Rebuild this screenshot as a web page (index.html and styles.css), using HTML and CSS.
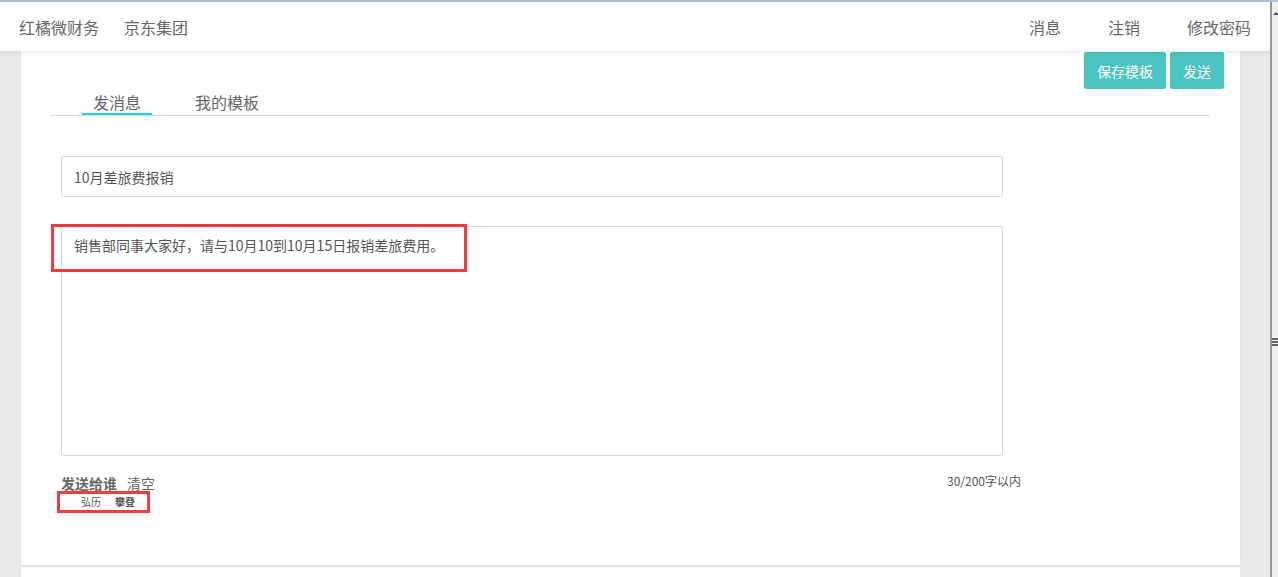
FILE: index.html
```html
<!DOCTYPE html>
<html lang="zh-CN">
<head>
    <meta charset="UTF-8">
    <meta name="viewport" content="width=device-width, initial-scale=1.0">
    <title>发消息</title>
    <link rel="stylesheet" href="styles.css">
</head>
<body>
    <section class="window">
        <section class="page">
            <header class="topbar">
                <nav class="nav nav-left">
                    <a class="nav-item">红橘微财务</a>
                    <a class="nav-item">京东集团</a>
                </nav>
                <nav class="nav nav-right">
                    <a class="nav-item">消息</a>
                    <a class="nav-item">注销</a>
                    <a class="nav-item">修改密码</a>
                </nav>
            </header>

            <section class="content">
                <section class="card">
                    <div class="actions">
                        <button class="btn">保存模板</button>
                        <button class="btn">发送</button>
                    </div>

                    <div class="tabs">
                        <span class="tab active">发消息</span>
                        <span class="tab">我的模板</span>
                    </div>

                    <div class="form">
                        <div class="field title-field">10月差旅费报销</div>

                        <div class="field body-field">
                            销售部同事大家好，请与10月10到10月15日报销差旅费用。
                            <span class="mark mark-body"></span>
                        </div>

                        <div class="footer-row">
                            <div class="to">
                                <b>发送给谁</b>
                                <span class="clear">清空</span>
                            </div>
                            <span class="counter">30/200字以内</span>
                        </div>

                        <div class="people">
                            <span class="person">弘历</span>
                            <span class="person strong">攀登</span>
                        </div>
                    </div>
                </section>
                <section class="card-next"></section>
            </section>
        </section>

        <aside class="scroll">
            <span class="scroll-up"></span>
            <span class="scroll-grip"></span>
        </aside>
    </section>
</body>
</html>
```

FILE: styles.css
```css
*{margin: 0;padding: 0;box-sizing: border-box;}
body{
    width: 1278px; height: 577px; overflow: hidden;
    font-family: "Noto Sans CJK SC", "Liberation Sans", sans-serif;
    color: #555; background: #e9e9e9;}
.window{display: flex; height: 577px; border-top: 2px solid #adc0d8;}
.page{width: 1270px; display: flex; flex-direction: column;}

/* шапка */
.topbar{
    height: 49px; background: #fff;
    display: flex; justify-content: space-between; align-items: center;
    padding: 0 19px; position: relative; z-index: 2;
    box-shadow: 0 2px 4px rgba(0,0,0,0.08);}
.nav{display: flex; gap: 25px;}
.nav-right{gap: 47px;}
.nav-item{font-size: 16px; line-height: 20px; color: #666; cursor: pointer;}

.content{padding: 0 30px 0 21px; flex: 1; display: flex; flex-direction: column;}
.card{
    background: #fff; height: 514px; padding: 1px 30px 0 29px;
    box-shadow: 0 1px 2px rgba(0,0,0,0.06);}
.card-next{background: #fff; flex: 1; margin-top: 2px;}

.actions{display: flex; justify-content: flex-end; gap: 4px; margin-right: -14px;}
.btn{
    height: 37px; padding: 0 12px; border: none; border-radius: 2px;
    background: #4cc4c2; color: #fff; font-family: inherit; font-size: 14px;}
.btn:first-child{width: 82px;}
.btn:last-child{width: 54px;}

.tabs{display: flex; gap: 32px; padding-left: 32px; border-bottom: 1px solid #dcdcdc;}
.tab{
    font-size: 16px; line-height: 22px; padding: 2px 11px 0;
    border-bottom: 2px solid transparent; color: #666;}
.tab.active{border-bottom-color: #19d6d6;}

.form{padding-left: 11px;}
.field{
    width: 942px; border: 1px solid #cdd7e1; border-radius: 3px;
    font-size: 14px; line-height: 20px; padding: 0 12px; color: #555;}
.title-field{height: 41px; margin-top: 40px; display: flex; align-items: center;}
.body-field{height: 230px; margin-top: 29px; padding-top: 8px; position: relative;}

/* красные пометки */
.mark{position: absolute; border: 3px solid #f33b3b;}
.mark-body{left: -11px; top: -3px; width: 416px; height: 48px;}

.footer-row{display: flex; justify-content: space-between; width: 960px; margin-top: 17px;}
.to{font-size: 14px; line-height: 20px; display: flex; gap: 10px;}
.to b{color: #666;}
.clear{color: #666;}
.counter{font-size: 12px; line-height: 16px; color: #555;}

.people{
    display: flex; gap: 14px; width: 93px; height: 22px; margin: -2px 0 0 -4px;
    padding-left: 21px; align-items: center; border: 3px solid #f33b3b;}
.person{font-size: 10px; line-height: 12px; color: #555;}
.person.strong{font-weight: bold;}

/* полоса прокрутки */
.scroll{
    width: 8px; background: #efefef; border-left: 2px solid #9a9a9a;
    position: relative;}
.scroll-up{
    position: absolute; left: 1px; top: 10px;
    border: 3px solid transparent; border-bottom: 3px solid #555; border-top: none;}
.scroll-grip{
    position: absolute; left: 0; top: 336px; width: 6px; height: 8px;
    border-top: 2px solid #666; border-bottom: 2px solid #666;}
.scroll-grip::after{content: ""; position: absolute; left: 0; right: 0; top: 1px; border-top: 2px solid #666;}
```
